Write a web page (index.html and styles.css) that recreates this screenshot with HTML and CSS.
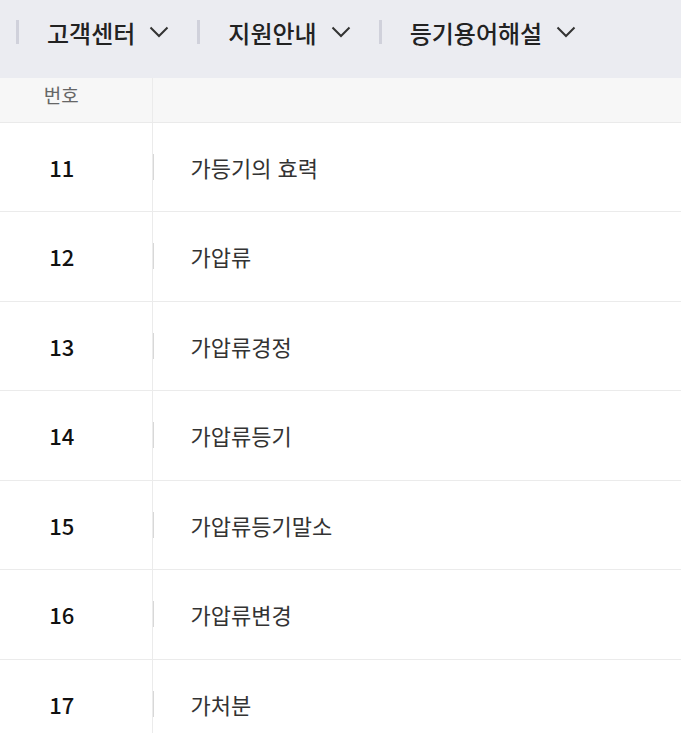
FILE: index.html
```html
<!DOCTYPE html>
<html lang="ko">
<head>
    <meta charset="UTF-8">
    <meta name="viewport" content="width=device-width, initial-scale=1.0">
    <title>등기용어해설</title>
    <link rel="stylesheet" href="styles.css">
</head>
<body>

<div class="topnav">
    <div class="nav-item">
        <span class="nav-label">고객센터</span>
        <svg class="chev" viewBox="0 0 20 12" width="20" height="12"><path d="M1.5 1.5l8.5 8.5 8.5-8.5" fill="none" stroke="#333" stroke-width="2"/></svg>
    </div>
    <div class="nav-item">
        <span class="nav-label">지원안내</span>
        <svg class="chev" viewBox="0 0 20 12" width="20" height="12"><path d="M1.5 1.5l8.5 8.5 8.5-8.5" fill="none" stroke="#333" stroke-width="2"/></svg>
    </div>
    <div class="nav-item">
        <span class="nav-label">등기용어해설</span>
        <svg class="chev" viewBox="0 0 20 12" width="20" height="12"><path d="M1.5 1.5l8.5 8.5 8.5-8.5" fill="none" stroke="#333" stroke-width="2"/></svg>
    </div>
</div>

<table class="term-table">
    <thead>
        <tr>
            <th class="col-no">번호</th>
            <th class="col-title"></th>
        </tr>
    </thead>
    <tbody>
        <tr><td class="col-no">11</td><td class="col-title"><span>가등기의 효력</span></td></tr>
        <tr><td class="col-no">12</td><td class="col-title"><span>가압류</span></td></tr>
        <tr><td class="col-no">13</td><td class="col-title"><span>가압류경정</span></td></tr>
        <tr><td class="col-no">14</td><td class="col-title"><span>가압류등기</span></td></tr>
        <tr><td class="col-no">15</td><td class="col-title"><span>가압류등기말소</span></td></tr>
        <tr><td class="col-no">16</td><td class="col-title"><span>가압류변경</span></td></tr>
        <tr><td class="col-no">17</td><td class="col-title"><span>가처분</span></td></tr>
    </tbody>
</table>

</body>
</html>
```

FILE: styles.css
```css
body {
    font-family: "Noto Sans CJK KR", "Noto Sans", sans-serif;
    margin: 0;
    padding: 0;
    background-color: #fff;
    color: #222;
}
.topnav {
    height: 78px;
    background-color: #ebecf1;
    display: flex;
    align-items: flex-start;
    padding-top: 20px;
    padding-left: 16px;
    box-sizing: border-box;
}
.nav-item {
    display: flex;
    align-items: center;
    height: 24px;
    border-left: 3px solid #d0d1db;
    padding-left: 28px;
    padding-right: 28px;
}
.nav-label {
    font-size: 24px;
    font-weight: 500;
    color: #222;
    line-height: 24px;
    margin-top: 2px;
}
.chev {
    margin-left: 14px;
}
.term-table {
    width: 100%;
    border-collapse: collapse;
}
.term-table th {
    height: 44px;
    background-color: #f7f7f7;
    font-weight: 400;
    font-size: 19px;
    color: #666;
    padding: 0;
    vertical-align: top;
    padding-top: 3px;
    box-sizing: border-box;
    border-bottom: 1px solid #eaeaea;
}
.term-table td {
    height: 88.5px;
    padding: 0;
    border-bottom: 1px solid #ebebeb;
    font-size: 22px;
}
.col-no {
    width: 152px;
    text-align: center;
    box-sizing: border-box;
    border-right: 1px solid #ebebeb;
}
th.col-no {
    padding-right: 29px !important;
}
td.col-no {
    color: #111;
    font-weight: 500;
    padding-right: 28px !important;
}
.col-title {
    text-align: left;
}
td.col-title span {
    display: inline-block;
    border-left: 1px solid #d8d8d8;
    padding-left: 37px;
    line-height: 26px;
    color: #333;
}
```
